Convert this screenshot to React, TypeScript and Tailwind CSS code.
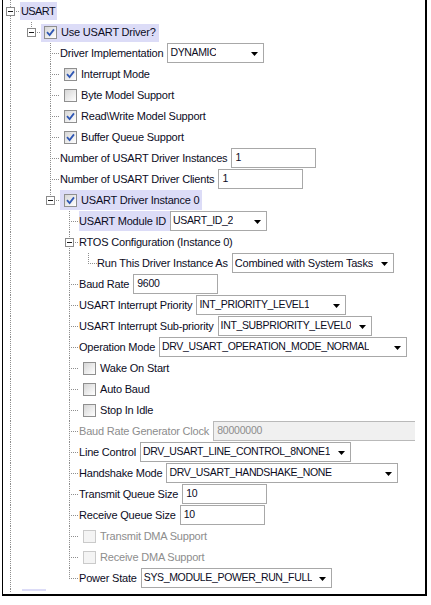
import React from "react";
import clsx from "clsx";

// tree guide columns: width of each indent column and x of its dotted line
const COLS = [
  { width: 17, x: 7 },
  { width: 21, x: 11 },
  { width: 19, x: 9 },
  { width: 19, x: 9 },
  { width: 18, x: 9 },
];

const LINE = "#8e8e8e";

function Guide({ col, h, on }: { col: number; h: number; on: boolean }) {
  const { width, x } = COLS[col];
  return (
    <svg width={width} height={h} className="block shrink-0">
      {on && (
        <line x1={x + 0.5} y1={0} x2={x + 0.5} y2={h} stroke={LINE} strokeDasharray="1 1" />
      )}
    </svg>
  );
}

function Connector({
  col,
  h,
  last,
  expandable,
}: {
  col: number;
  h: number;
  last?: boolean;
  expandable?: boolean;
}) {
  const { width, x } = COLS[col];
  const mid = Math.floor(h / 2);
  return (
    <svg width={width} height={h} className="block shrink-0">
      <line
        x1={x + 0.5}
        y1={0}
        x2={x + 0.5}
        y2={last ? mid + 1 : h}
        stroke={LINE}
        strokeDasharray="1 1"
      />
      <line x1={x} y1={mid + 0.5} x2={width} y2={mid + 0.5} stroke={LINE} strokeDasharray="1 1" />
      {expandable && (
        <g>
          <rect x={x - 4 + 0.5} y={mid - 4 + 0.5} width={8} height={8} fill="#fff" stroke="#8a8a8a" />
          <line x1={x - 2} y1={mid + 0.5} x2={x + 3} y2={mid + 0.5} stroke="#1a1a1a" />
        </g>
      )}
    </svg>
  );
}

interface RowProps {
  depth: number;
  guides: boolean[];
  last?: boolean;
  expandable?: boolean;
  tall?: boolean;
  children: React.ReactNode;
}

function Row({ depth, guides, last, expandable, tall, children }: RowProps) {
  const h = tall ? 22 : 21;
  return (
    <div className={clsx("flex shrink-0 items-center", tall ? "h-[22px]" : "h-[21px]")}>
      {guides.map((on, i) => (
        <Guide key={i} col={i} h={h} on={on} />
      ))}
      <Connector col={depth} h={h} last={last} expandable={expandable} />
      {children}
    </div>
  );
}

function CheckBox({ checked, disabled }: { checked?: boolean; disabled?: boolean }) {
  return (
    <div
      className={clsx(
        "flex h-[13px] w-[13px] shrink-0 items-center justify-center border",
        disabled
          ? "border-[#cacaca] bg-[#f4f4f4]"
          : "border-[#8f8f8f] bg-linear-to-br from-[#d6d6d6] to-white"
      )}
    >
      {checked && (
        <svg width={11} height={11} className="block">
          <path d="M2 5.2 L4.6 8 L9 2.4" fill="none" stroke="#2f57b4" strokeWidth={1.8} />
        </svg>
      )}
    </div>
  );
}

function CheckItem({
  label,
  checked,
  disabled,
  highlight,
}: {
  label: string;
  checked?: boolean;
  disabled?: boolean;
  highlight?: boolean;
}) {
  return (
    <div
      className={clsx(
        "flex items-center gap-[4px] whitespace-nowrap pl-[4px] pr-[3px]",
        highlight ? "h-[20px] self-start bg-[#dcdcf7]" : "",
        disabled ? "text-[#8d8d8d]" : ""
      )}
    >
      <CheckBox checked={checked} disabled={disabled} />
      <span>{label}</span>
    </div>
  );
}

function Label({ text, highlight, disabled }: { text: string; highlight?: boolean; disabled?: boolean }) {
  return (
    <span
      className={clsx(
        "whitespace-nowrap pr-[4px]",
        highlight ? "flex h-[20px] items-center self-start bg-[#dcdcf7]" : "",
        disabled ? "text-[#8d8d8d]" : ""
      )}
    >
      {text}
    </span>
  );
}

function Combo({ value, w, mixed }: { value: string; w: string; mixed?: boolean }) {
  return (
    <div
      className={clsx(
        "flex h-[20px] shrink-0 items-center justify-between self-start border border-[#a8a8a8] bg-white pl-[2px] pr-[5px] whitespace-nowrap",
        w
      )}
    >
      {/* upper-case constants are set tighter, like the narrow caps of the original UI font */}
      <span className={clsx("overflow-hidden", mixed ? "" : "text-[10.5px] tracking-[-0.35px]")}>{value}</span>
      <svg width={7} height={4} className="mt-[2px] ml-[2px] block shrink-0">
        <polygon points="0,0 7,0 3.5,4" fill="#000" />
      </svg>
    </div>
  );
}

function Field({ value, w, disabled }: { value: string; w: string; disabled?: boolean }) {
  return (
    <div
      className={clsx(
        "flex h-[20px] shrink-0 items-center self-start border pl-[3px] whitespace-nowrap text-[10.5px] tracking-[-0.2px]",
        disabled ? "border-[#b9b9b9] border-r-0 bg-[#f0f0f0] text-[#8d8d8d]" : "border-[#a8a8a8] bg-white",
        w
      )}
    >
      {value}
    </div>
  );
}

export default function App() {
  // guide patterns per depth
  const g2 = [true, false];
  const g3 = [true, false, false];
  const g4 = [true, false, false, true];

  return (
    <div className="h-[605px] w-[431px] overflow-hidden bg-white font-['Liberation_Sans',Arial,sans-serif] text-[11px] tracking-[-0.2px] text-[#0c0c1e]">
      <div className="ml-[2px] flex h-[596px] w-[425px] flex-col overflow-hidden border-b-2 border-l border-r-2 border-black">
        <Row depth={0} guides={[]} expandable tall>
          <span className="flex h-[18px] items-center bg-[#dcdcf7] pl-[1px] pr-[2px] tracking-[-0.6px]">USART</span>
        </Row>
        <Row depth={1} guides={[true]} last expandable>
          <div className="flex h-[18px] items-center gap-[4px] bg-[#dcdcf7] pl-[3px] pr-[3px]">
            <CheckBox checked />
            <span>Use USART Driver?</span>
          </div>
        </Row>
        <Row depth={2} guides={g2}>
          <Label text="Driver Implementation" />
          <Combo value="DYNAMIC" w="w-[97px]" />
        </Row>
        <Row depth={2} guides={g2}>
          <CheckItem label="Interrupt Mode" checked />
        </Row>
        <Row depth={2} guides={g2}>
          <CheckItem label="Byte Model Support" />
        </Row>
        <Row depth={2} guides={g2}>
          <CheckItem label="Read\Write Model Support" checked />
        </Row>
        <Row depth={2} guides={g2}>
          <CheckItem label="Buffer Queue Support" checked />
        </Row>
        <Row depth={2} guides={g2}>
          <Label text="Number of USART Driver Instances" />
          <Field value="1" w="w-[85px]" />
        </Row>
        <Row depth={2} guides={g2}>
          <Label text="Number of USART Driver Clients" />
          <Field value="1" w="w-[85px]" />
        </Row>
        <Row depth={2} guides={g2} last expandable>
          <CheckItem label="USART Driver Instance 0" checked highlight />
        </Row>
        <Row depth={3} guides={g3}>
          <Label text="USART Module ID" highlight />
          <Combo value="USART_ID_2" w="w-[97px]" />
        </Row>
        <Row depth={3} guides={g3} expandable>
          <span className="whitespace-nowrap">RTOS Configuration (Instance 0)</span>
        </Row>
        <Row depth={4} guides={g4} last>
          <Label text="Run This Driver Instance As" />
          <Combo value="Combined with System Tasks" w="w-[162px]" mixed />
        </Row>
        <Row depth={3} guides={g3}>
          <Label text="Baud Rate" />
          <Field value="9600" w="w-[85px]" />
        </Row>
        <Row depth={3} guides={g3}>
          <Label text="USART Interrupt Priority" />
          <Combo value="INT_PRIORITY_LEVEL1" w="w-[150px]" />
        </Row>
        <Row depth={3} guides={g3}>
          <Label text="USART Interrupt Sub-priority" />
          <Combo value="INT_SUBPRIORITY_LEVEL0" w="w-[154px]" />
        </Row>
        <Row depth={3} guides={g3}>
          <Label text="Operation Mode" />
          <Combo value="DRV_USART_OPERATION_MODE_NORMAL" w="w-[248px]" />
        </Row>
        <Row depth={3} guides={g3}>
          <CheckItem label="Wake On Start" />
        </Row>
        <Row depth={3} guides={g3}>
          <CheckItem label="Auto Baud" />
        </Row>
        <Row depth={3} guides={g3}>
          <CheckItem label="Stop In Idle" />
        </Row>
        <Row depth={3} guides={g3}>
          <Label text="Baud Rate Generator Clock" disabled />
          <Field value="80000000" w="w-[202px]" disabled />
        </Row>
        <Row depth={3} guides={g3}>
          <Label text="Line Control" />
          <Combo value="DRV_USART_LINE_CONTROL_8NONE1" w="w-[211px]" />
        </Row>
        <Row depth={3} guides={g3}>
          <Label text="Handshake Mode" />
          <Combo value="DRV_USART_HANDSHAKE_NONE" w="w-[232px]" />
        </Row>
        <Row depth={3} guides={g3}>
          <Label text="Transmit Queue Size" />
          <Field value="10" w="w-[85px]" />
        </Row>
        <Row depth={3} guides={g3}>
          <Label text="Receive Queue Size" />
          <Field value="10" w="w-[85px]" />
        </Row>
        <Row depth={3} guides={g3}>
          <CheckItem label="Transmit DMA Support" disabled />
        </Row>
        <Row depth={3} guides={g3}>
          <CheckItem label="Receive DMA Support" disabled />
        </Row>
        <Row depth={3} guides={g3} last>
          <Label text="Power State" />
          <Combo value="SYS_MODULE_POWER_RUN_FULL" w="w-[191px]" />
        </Row>
        {/* next sibling, cut off by the viewport */}
        <div className="flex h-[4px] shrink-0">
          <Guide col={0} h={4} on />
          <div className="ml-[2px] h-[2px] w-[24px] bg-[#dcdcf7]" />
        </div>
      </div>
    </div>
  );
}
